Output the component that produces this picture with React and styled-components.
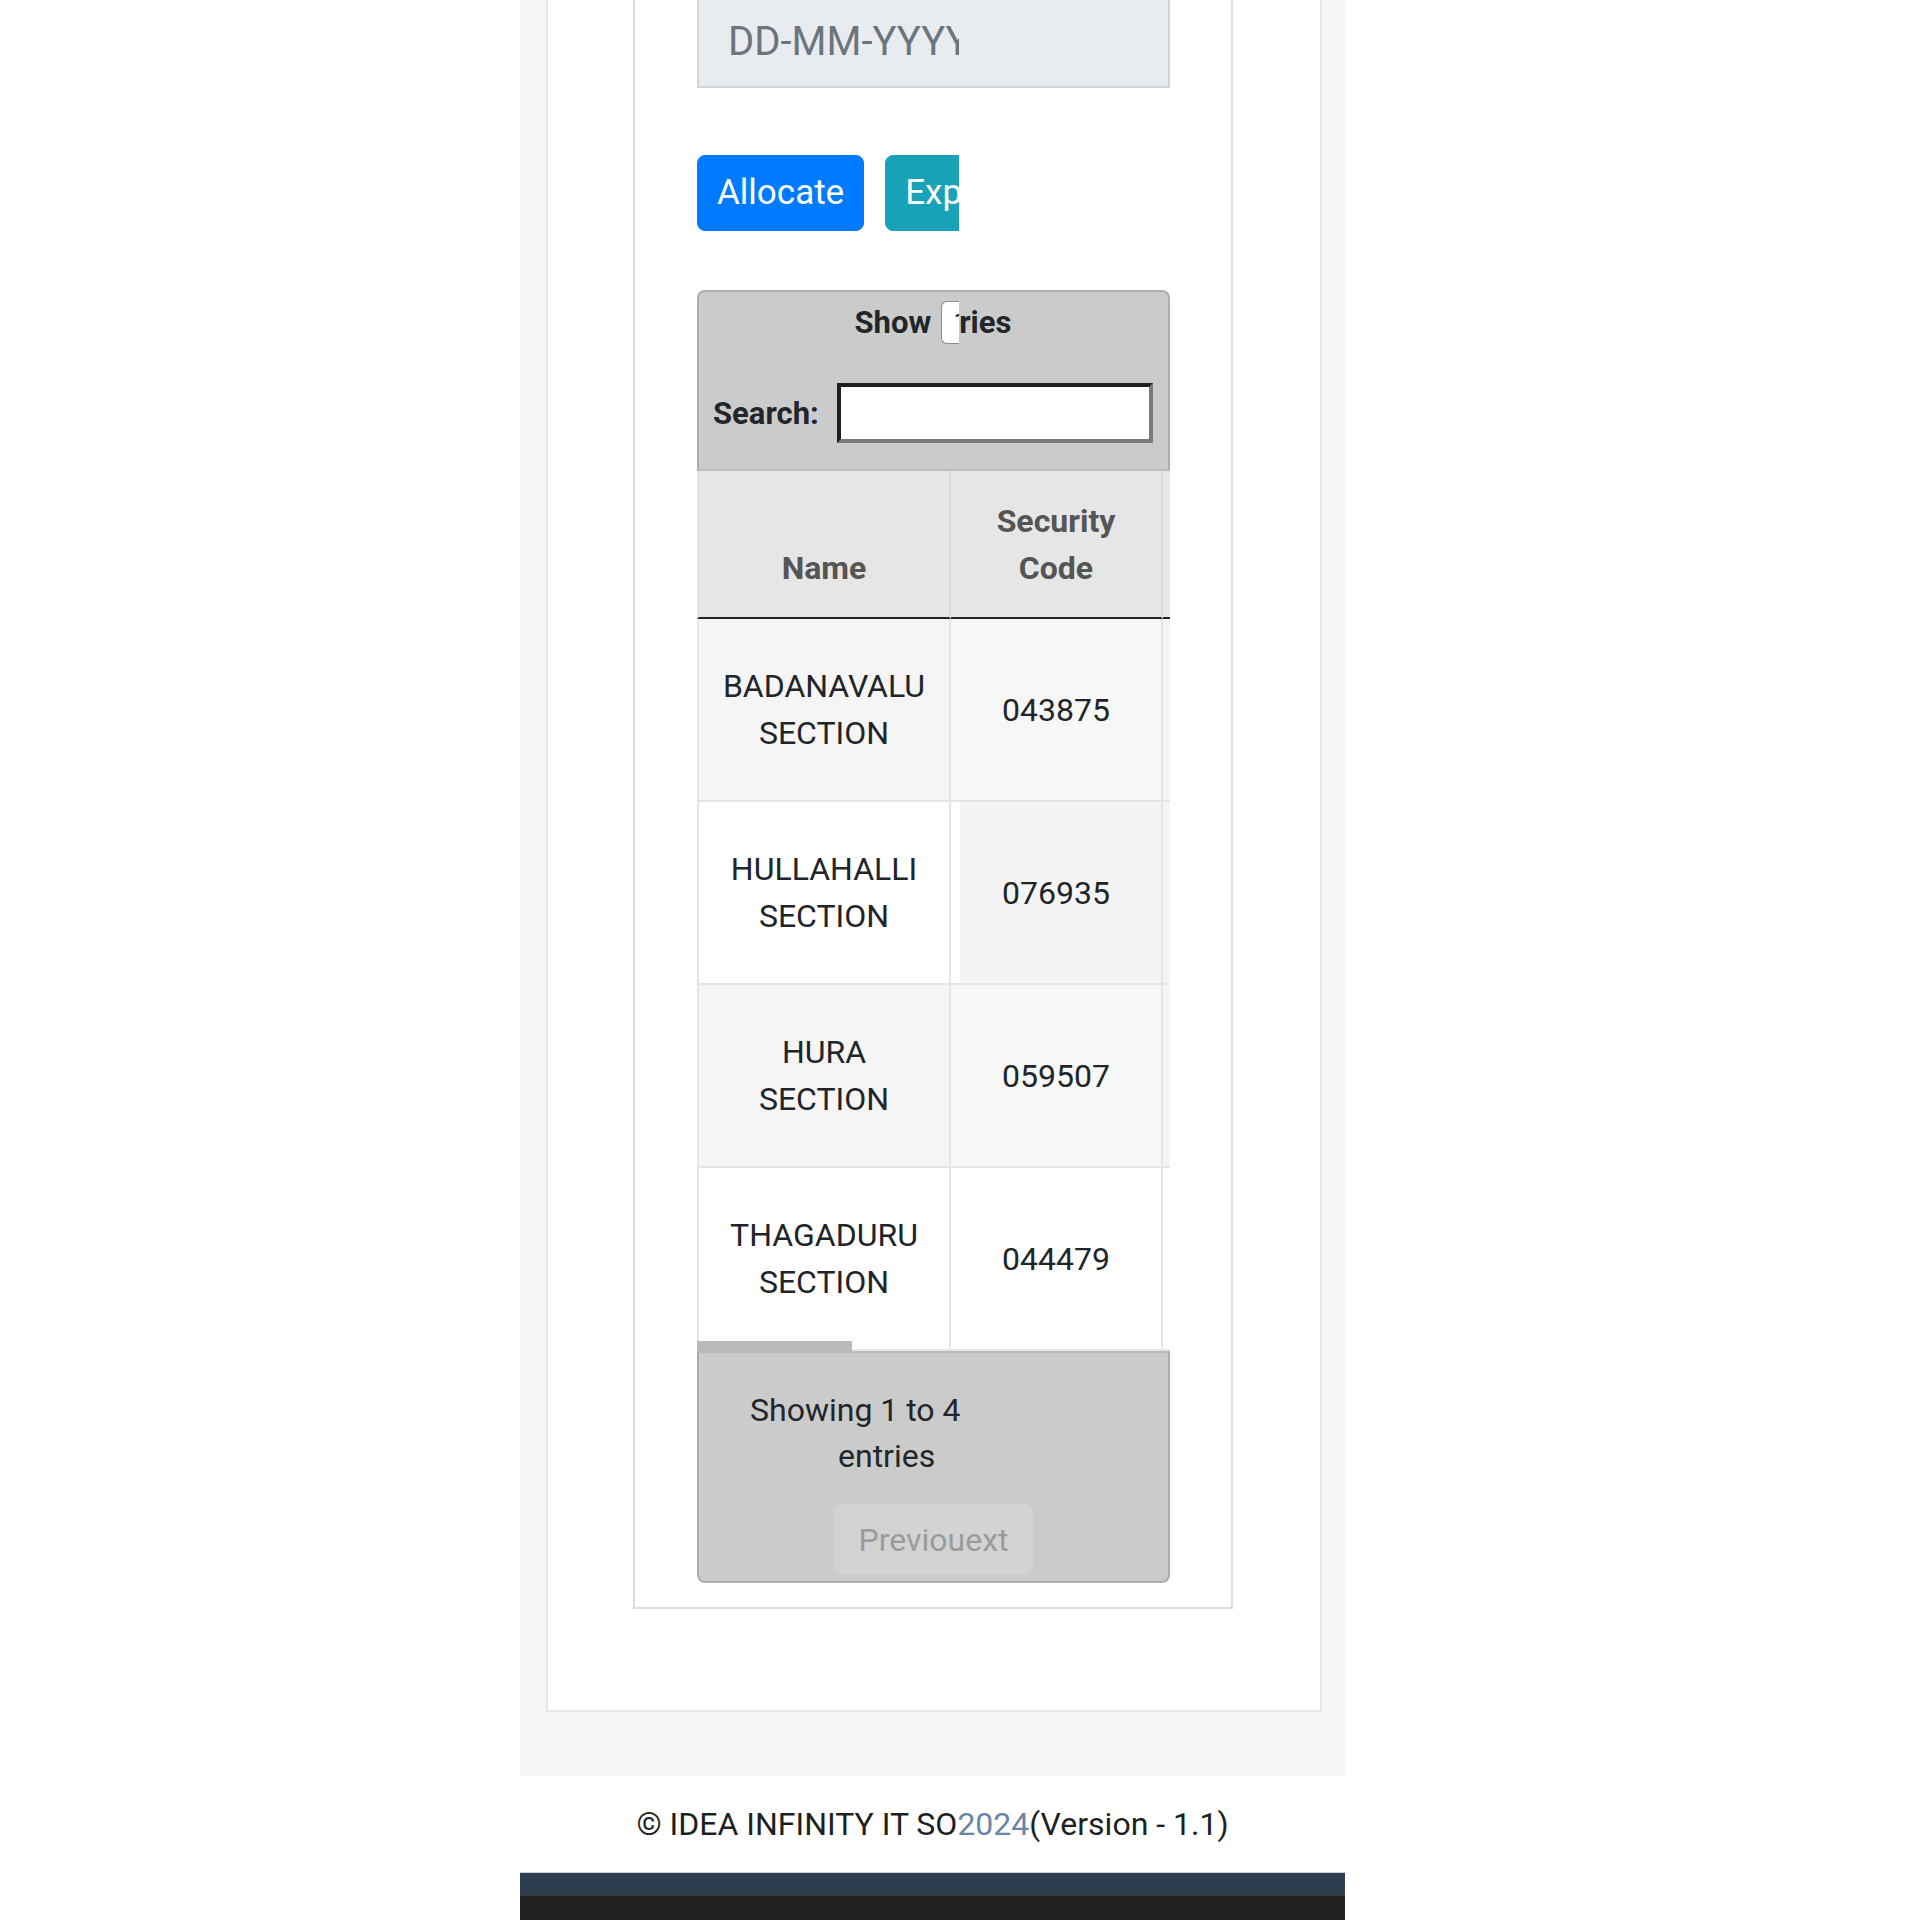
import React from "react";
import styled, { createGlobalStyle } from "styled-components";

const GlobalStyle = createGlobalStyle`
  html, body { margin: 0; padding: 0; background: #ffffff; }
  body { font-family: Roboto, "Liberation Sans", Arial, sans-serif; color: #212529; }
  *, *::before, *::after { box-sizing: border-box; }
`;

const Page = styled.div`
  width: 1920px;
  height: 1920px;
  overflow: hidden;
  padding-left: 520px;
`;

const Column = styled.div`
  width: 825px;
`;

const Shell = styled.div`
  background: #f6f6f6;
  padding: 0 23px 64px 26px;
`;

const Card = styled.section`
  background: #ffffff;
  border: 2px solid #e4e7eb;
  border-top: none;
  padding: 0 87px 101px 85px;
`;

const FormBox = styled.div`
  border: 2px solid #dcdcdc;
  border-top: none;
  padding: 0 61px 24px 62px;
`;

const DateField = styled.div`
  height: 88px;
  background: #e9ecef;
  border: 2px solid #ced4da;
  border-top: none;
  padding: 18px 0 0 29px;
  font-size: 40px;
  line-height: 47px;
  color: #6c757d;
`;

const DateText = styled.span`
  display: inline-block;
  width: 231px;
  overflow: hidden;
  white-space: nowrap;
  vertical-align: top;
`;

const ButtonRow = styled.div`
  display: flex;
  gap: 21px;
  width: 262px;
  overflow: hidden;
  margin-top: 67px;
`;

const Button = styled.button`
  flex: none;
  font-family: inherit;
  font-size: 35px;
  line-height: 54px;
  padding: 10px 19px;
  border: 1px solid ${(p) => p.$bg};
  border-radius: 8px;
  background: ${(p) => p.$bg};
  color: #ffffff;
`;

const TableWrap = styled.div`
  margin-top: 59px;
`;

const TopBar = styled.div`
  background: #cbcbcb;
  border: 2px solid #adadad;
  border-bottom-color: #bdbdbd;
  border-radius: 8px 8px 0 0;
  padding: 7px 15px 26px 14px;
`;

const ShowRow = styled.div`
  display: flex;
  justify-content: center;
  align-items: center;
  font-size: 31px;
  line-height: 47px;
  font-weight: 700;
  color: #22262a;
`;

const LengthSelect = styled.div`
  width: 18px;
  height: 43px;
  margin-left: 10px;
  background: #ffffff;
  border: 1px solid #8d8d8d;
  border-right: none;
  border-radius: 6px 0 0 6px;
  overflow: hidden;
  white-space: nowrap;
  padding-left: 11px;
  font-size: 30px;
  font-weight: 400;
  line-height: 41px;
  color: #222;
`;

const SearchRow = styled.label`
  display: flex;
  align-items: center;
  gap: 18px;
  margin-top: 37px;
  font-size: 31px;
  line-height: 47px;
  font-weight: 700;
  color: #22262a;
`;

const SearchInput = styled.input`
  flex: 1;
  min-width: 0;
  height: 60px;
  background: #ffffff;
  border-style: solid;
  border-width: 4px;
  border-color: #1e1e1e #7a7a7a #7a7a7a #1e1e1e;
  border-radius: 0;
  padding: 0 8px;
  font-size: 30px;
  font-family: inherit;
`;

const ScrollArea = styled.div`
  position: relative;
  overflow: hidden;
`;

const Grid = styled.div`
  display: grid;
  grid-template-columns: 254px 212px 200px;
  width: 666px;
`;

const HeadCell = styled.div`
  display: flex;
  align-items: flex-end;
  justify-content: center;
  text-align: center;
  background: #e6e6e6;
  padding: 27px 20px 25px;
  border-right: 2px solid #dadada;
  border-left: ${(p) => (p.$first ? "2px solid #e6e6e6" : "none")};
  border-bottom: 2px solid #212529;
  font-size: 32px;
  line-height: 47px;
  font-weight: 700;
  color: #555555;
`;

const Cell = styled.div`
  display: flex;
  align-items: center;
  justify-content: center;
  text-align: center;
  background: ${(p) => p.$bg};
  padding: 44px 16px 43px;
  min-height: 183px;
  border-right: 2px solid #e2e5e9;
  border-left: ${(p) => (p.$first ? "2px solid #e2e5e9" : "none")};
  border-bottom: 2px solid #e2e5e9;
  font-size: 32px;
  line-height: 47px;
  color: #212529;
`;

const ScrollThumb = styled.div`
  position: absolute;
  left: 0;
  bottom: 0;
  width: 155px;
  height: 10px;
  background: #bababa;
`;

const BottomBar = styled.div`
  background: #cbcbcb;
  border: 2px solid #adadad;
  border-top-color: #b9b9b9;
  border-radius: 0 0 8px 8px;
  padding: 34px 0 6px;
`;

const InfoLine = styled.div`
  padding-left: ${(p) => p.$indent}px;
  font-size: 32px;
  line-height: 46px;
  color: #22262a;
`;

const PageButton = styled.div`
  width: 199px;
  height: 71px;
  margin: 25px auto 0;
  background: #d3d3d3;
  border-radius: 8px;
  display: flex;
  align-items: center;
  justify-content: center;
  font-size: 32px;
  color: #9b9b9b;
`;

const FooterText = styled.footer`
  height: 96px;
  display: flex;
  align-items: center;
  justify-content: center;
  font-size: 32px;
  color: #1d1f21;
  white-space: nowrap;
`;

const Year = styled.span`
  color: #6a86a5;
`;

const NavyBar = styled.div`
  height: 22px;
  background: #2c3e50;
  border-top: 1px solid #c9ced3;
`;

const DarkBar = styled.div`
  height: 60px;
  background: #212121;
  border-top: 2px solid #3b3b3b;
`;

const rows = [
  { name: "BADANAVALU SECTION", code: "043875", bg: ["#f5f5f5", "#f7f7f7", "#f5f5f5"] },
  { name: "HULLAHALLI SECTION", code: "076935", bg: ["#ffffff", "linear-gradient(to right, #ffffff 9px, #f4f4f4 9px)", "#f5f5f5"] },
  { name: "HURA SECTION", code: "059507", bg: ["#f5f5f5", "#f7f7f7", "#f5f5f5"] },
  { name: "THAGADURU SECTION", code: "044479", bg: ["#ffffff", "#ffffff", "#ffffff"] },
];

export default function App() {
  return (
    <>
      <GlobalStyle />
      <Page>
        <Column>
          <Shell>
            <Card>
              <FormBox>
                <DateField>
                  <DateText>DD-MM-YYYY</DateText>
                </DateField>
                <ButtonRow>
                  <Button $bg="#007bff">Allocate</Button>
                  <Button $bg="#17a2b8">Export</Button>
                </ButtonRow>
                <TableWrap>
                  <TopBar>
                    <ShowRow>
                      <span>Show</span>
                      <LengthSelect>10</LengthSelect>
                      <span>ries</span>
                    </ShowRow>
                    <SearchRow>
                      <span>Search:</span>
                      <SearchInput type="search" />
                    </SearchRow>
                  </TopBar>
                  <ScrollArea>
                    <Grid>
                      <HeadCell $first>Name</HeadCell>
                      <HeadCell>Security Code</HeadCell>
                      <HeadCell>Action</HeadCell>
                      {rows.map((r) => (
                        <React.Fragment key={r.code}>
                          <Cell $first $bg={r.bg[0]}>{r.name}</Cell>
                          <Cell $bg={r.bg[1]}>{r.code}</Cell>
                          <Cell $bg={r.bg[2]}></Cell>
                        </React.Fragment>
                      ))}
                    </Grid>
                    <ScrollThumb />
                  </ScrollArea>
                  <BottomBar>
                    <InfoLine $indent={51}>Showing 1 to 4</InfoLine>
                    <InfoLine $indent={139}>entries</InfoLine>
                    <PageButton>Previouext</PageButton>
                  </BottomBar>
                </TableWrap>
              </FormBox>
            </Card>
          </Shell>
          <FooterText>
            © IDEA INFINITY IT SO<Year>2024</Year>(Version - 1.1)
          </FooterText>
          <NavyBar />
          <DarkBar />
        </Column>
      </Page>
    </>
  );
}
